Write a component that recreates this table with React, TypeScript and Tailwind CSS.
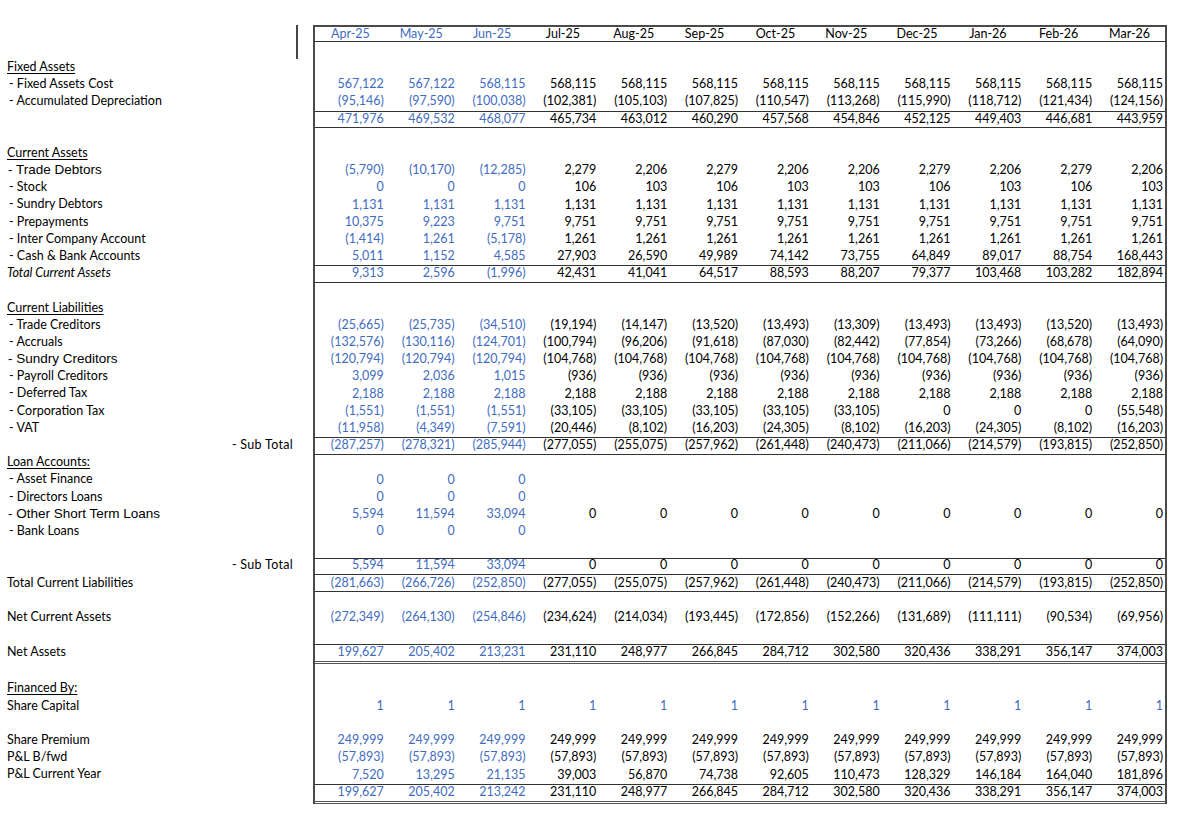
type Row = {
  label?: string;
  kind?: "head" | "item" | "special" | "italic" | "plain" | "sub";
  vals?: (string | null)[];
  blueAll?: boolean;
  lines?: "tb" | "b" | "td";
};

const months = [
  "Apr-25", "May-25", "Jun-25", "Jul-25", "Aug-25", "Sep-25",
  "Oct-25", "Nov-25", "Dec-25", "Jan-26", "Feb-26", "Mar-26",
];

const rep = (v: string, n: number) => Array(n).fill(v) as string[];

// rules drawn with inset shadows so they don't eat row height (like excel cell borders)
const lineClass = {
  tb: "shadow-[inset_0_1px_0_#333,inset_0_-1px_0_#333]",
  b: "shadow-[inset_0_-1px_0_#333]",
  td: "shadow-[inset_0_1px_0_#333,inset_0_-1px_0_#555,inset_0_-2px_0_#fff,inset_0_-3px_0_#555]",
};

const rows: Row[] = [
  {},
  { label: "Fixed Assets", kind: "head" },
  { label: "- Fixed Assets Cost", kind: "item", vals: ["567,122", "567,122", ...rep("568,115", 10)] },
  {
    label: "- Accumulated Depreciation",
    kind: "item",
    vals: ["(95,146)", "(97,590)", "(100,038)", "(102,381)", "(105,103)", "(107,825)", "(110,547)", "(113,268)", "(115,990)", "(118,712)", "(121,434)", "(124,156)"],
  },
  {
    lines: "tb",
    vals: ["471,976", "469,532", "468,077", "465,734", "463,012", "460,290", "457,568", "454,846", "452,125", "449,403", "446,681", "443,959"],
  },
  {},
  { label: "Current Assets", kind: "head" },
  {
    label: "- Trade Debtors",
    kind: "special",
    vals: ["(5,790)", "(10,170)", "(12,285)", "2,279", "2,206", "2,279", "2,206", "2,206", "2,279", "2,206", "2,279", "2,206"],
  },
  { label: "- Stock", kind: "item", vals: ["0", "0", "0", "106", "103", "106", "103", "103", "106", "103", "106", "103"] },
  { label: "- Sundry Debtors", kind: "item", vals: rep("1,131", 12) },
  { label: "- Prepayments", kind: "item", vals: ["10,375", "9,223", ...rep("9,751", 10)] },
  { label: "- Inter Company Account", kind: "item", vals: ["(1,414)", "1,261", "(5,178)", ...rep("1,261", 9)] },
  {
    label: "- Cash & Bank Accounts",
    kind: "item",
    vals: ["5,011", "1,152", "4,585", "27,903", "26,590", "49,989", "74,142", "73,755", "64,849", "89,017", "88,754", "168,443"],
  },
  {
    label: "Total Current Assets",
    kind: "italic",
    lines: "tb",
    vals: ["9,313", "2,596", "(1,996)", "42,431", "41,041", "64,517", "88,593", "88,207", "79,377", "103,468", "103,282", "182,894"],
  },
  {},
  { label: "Current Liabilities", kind: "head" },
  {
    label: "- Trade Creditors",
    kind: "item",
    vals: ["(25,665)", "(25,735)", "(34,510)", "(19,194)", "(14,147)", "(13,520)", "(13,493)", "(13,309)", "(13,493)", "(13,493)", "(13,520)", "(13,493)"],
  },
  {
    label: "- Accruals",
    kind: "item",
    vals: ["(132,576)", "(130,116)", "(124,701)", "(100,794)", "(96,206)", "(91,618)", "(87,030)", "(82,442)", "(77,854)", "(73,266)", "(68,678)", "(64,090)"],
  },
  { label: "- Sundry Creditors", kind: "special", vals: [...rep("(120,794)", 3), ...rep("(104,768)", 9)] },
  { label: "- Payroll Creditors", kind: "item", vals: ["3,099", "2,036", "1,015", ...rep("(936)", 9)] },
  { label: "- Deferred Tax", kind: "item", vals: rep("2,188", 12) },
  { label: "- Corporation Tax", kind: "item", vals: [...rep("(1,551)", 3), ...rep("(33,105)", 5), "0", "0", "0", "(55,548)"] },
  {
    label: "- VAT",
    kind: "item",
    vals: ["(11,958)", "(4,349)", "(7,591)", "(20,446)", "(8,102)", "(16,203)", "(24,305)", "(8,102)", "(16,203)", "(24,305)", "(8,102)", "(16,203)"],
  },
  {
    label: "- Sub Total",
    kind: "sub",
    lines: "tb",
    vals: ["(287,257)", "(278,321)", "(285,944)", "(277,055)", "(255,075)", "(257,962)", "(261,448)", "(240,473)", "(211,066)", "(214,579)", "(193,815)", "(252,850)"],
  },
  { label: "Loan Accounts:", kind: "head" },
  { label: "- Asset Finance", kind: "item", vals: ["0", "0", "0", ...Array(9).fill(null)] },
  { label: "- Directors Loans", kind: "item", vals: ["0", "0", "0", ...Array(9).fill(null)] },
  { label: "- Other Short Term Loans", kind: "special", vals: ["5,594", "11,594", "33,094", ...rep("0", 9)] },
  { label: "- Bank Loans", kind: "item", vals: ["0", "0", "0", ...Array(9).fill(null)] },
  {},
  { label: "- Sub Total", kind: "sub", lines: "tb", vals: ["5,594", "11,594", "33,094", ...rep("0", 9)] },
  {
    label: "Total Current Liabilities",
    kind: "plain",
    lines: "b",
    vals: ["(281,663)", "(266,726)", "(252,850)", "(277,055)", "(255,075)", "(257,962)", "(261,448)", "(240,473)", "(211,066)", "(214,579)", "(193,815)", "(252,850)"],
  },
  {},
  {
    label: "Net Current Assets",
    kind: "plain",
    vals: ["(272,349)", "(264,130)", "(254,846)", "(234,624)", "(214,034)", "(193,445)", "(172,856)", "(152,266)", "(131,689)", "(111,111)", "(90,534)", "(69,956)"],
  },
  {},
  {
    label: "Net Assets",
    kind: "plain",
    lines: "td",
    vals: ["199,627", "205,402", "213,231", "231,110", "248,977", "266,845", "284,712", "302,580", "320,436", "338,291", "356,147", "374,003"],
  },
  {},
  { label: "Financed By:", kind: "head" },
  { label: "Share Capital", kind: "plain", blueAll: true, vals: rep("1", 12) },
  {},
  { label: "Share Premium", kind: "plain", vals: rep("249,999", 12) },
  { label: "P&L B/fwd", kind: "plain", vals: rep("(57,893)", 12) },
  {
    label: "P&L Current Year",
    kind: "plain",
    vals: ["7,520", "13,295", "21,135", "39,003", "56,870", "74,738", "92,605", "110,473", "128,329", "146,184", "164,040", "181,896"],
  },
  {
    lines: "td",
    vals: ["199,627", "205,402", "213,242", "231,110", "248,977", "266,845", "284,712", "302,580", "320,436", "338,291", "356,147", "374,003"],
  },
];

function Label({ row }: { row: Row }) {
  if (!row.label) return null;
  switch (row.kind) {
    case "head":
      return <span className="pl-[7px] underline underline-offset-[2px]">{row.label}</span>;
    case "item":
      return <span className="pl-[9px]">{row.label}</span>;
    case "special":
      return (
        <span className="pl-[8px] font-['Liberation_Sans',Arial,sans-serif] text-[13.5px]">
          {row.label}
        </span>
      );
    case "italic":
      return <span className="pl-[7px] italic">{row.label}</span>;
    case "sub":
      return <span className="ml-auto pr-[20px] tracking-[0.3px]">{row.label}</span>;
    default:
      return <span className="pl-[7px]">{row.label}</span>;
  }
}

export default function App() {
  return (
    <div className="min-h-screen w-[1183px] bg-white pt-[25px] font-['Lato','Liberation_Sans',sans-serif] text-[12.5px] text-black">
      {/* header */}
      <div className="flex h-[17px]">
        <div className="w-[313px] shrink-0">
          <div className="h-[34px] w-[298px] border-r-2 border-[#444]" />
        </div>
        <div className="grid w-[854px] grid-cols-12 border-x-2 border-t-2 border-[#4a4a4a] shadow-[inset_0_-1px_0_#333]">
          {months.map((m, i) => (
            <div
              key={m}
              className={`flex items-center justify-center leading-none ${i < 3 ? "text-[#3f6cbf]" : ""}`}
            >
              {m}
            </div>
          ))}
        </div>
      </div>

      {rows.map((row, ri) => {
        const dbl = row.lines === "td";
        return (
          <div key={ri} className={`flex ${dbl ? "h-[20px]" : "h-[17.2px]"}`}>
            <div className={`flex w-[313px] shrink-0 items-center whitespace-pre ${dbl ? "pb-[3px]" : "pb-[1px]"}`}>
              <Label row={row} />
            </div>
            <div
              className={`grid w-[854px] grid-cols-12 border-x-2 border-x-[#4a4a4a] ${row.lines ? lineClass[row.lines] : ""}`}
            >
              {months.map((m, i) => {
                const v = row.vals ? row.vals[i] : null;
                const blue = i < 3 || row.blueAll;
                return (
                  <div
                    key={m}
                    className={`flex items-center justify-end pr-[2px] leading-none ${dbl ? "pb-[3px]" : "pb-[1px]"} ${blue ? "text-[#3f6cbf]" : ""}`}
                  >
                    {v}
                  </div>
                );
              })}
            </div>
          </div>
        );
      })}
    </div>
  );
}
